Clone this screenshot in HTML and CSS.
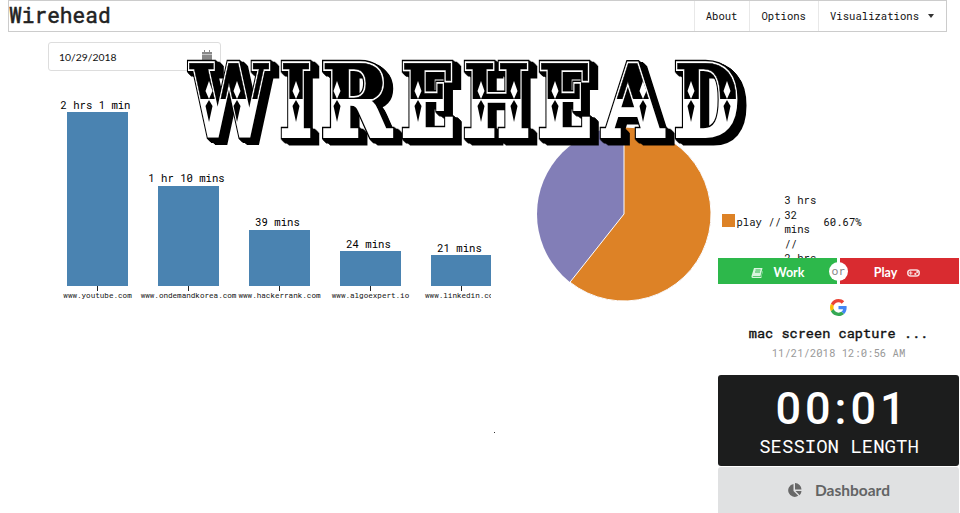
FILE: index.html
```html
<!DOCTYPE html>
<html lang="en">
<head>
<meta charset="utf-8">
<title>Wirehead</title>
<link rel="stylesheet" href="styles.css">
</head>
<body>
<nav class="nav">
  <div class="brand">Wirehead</div>
  <div class="links"><a>About</a><a>Options</a><a>Visualizations<i class="caret"></i></a></div>
</nav>
<main class="main">
  <section class="activity">
    <div class="date-input"><span>10/29/2018</span>
      <svg width="10" height="11" viewBox="0 0 10 11"><path d="M0 2h2V0h1v2h4V0h1v2h2v2H0zM0 4.500h10V11H0z" fill="#888"/></svg>
    </div>
    <div class="chart">
      <div class="col"><span class="value">2 hrs 1 min</span><div class="bar" style="height:174px"></div><i class="tick"></i><span class="site">www.youtube.com</span></div>
      <div class="col"><span class="value">1 hr 10 mins</span><div class="bar" style="height:100.500px"></div><i class="tick"></i><span class="site">www.ondemandkorea.com</span></div>
      <div class="col"><span class="value">39 mins</span><div class="bar" style="height:56.500px"></div><i class="tick"></i><span class="site">www.hackerrank.com</span></div>
      <div class="col"><span class="value">24 mins</span><div class="bar" style="height:35px"></div><i class="tick"></i><span class="site">www.algoexpert.io</span></div>
      <div class="col"><span class="value">21 mins</span><div class="bar" style="height:31px"></div><i class="tick"></i><span class="site">www.linkedin.com</span></div>
    </div>
  </section>
  <svg class="pie" width="176" height="176" viewBox="-88 -88 176 176">
    <circle r="87" fill="#827eb7"/>
    <path d="M0 0V-87A87 87 0 1 1 -54 68.200Z" fill="#dd8226" stroke="#fff"/>
  </svg>
  <div class="legend"><i class="swatch"></i><span class="kind">play //</span><span class="time">3 hrs<br>32<br>mins<br>//<br>2 hrs</span><span class="share">60.67%</span></div>
</main>
<i class="dot"></i>

<svg class="logo" width="572" height="96" viewBox="182 54 572 96">
  <defs>
    <linearGradient id="face" gradientUnits="userSpaceOnUse" x1="0" y1="61" x2="0" y2="139">
      <stop offset=".49" stop-color="#000"/><stop offset=".49" stop-color="#fff"/>
    </linearGradient>
    <g id="word">
      <text x="190" y="136" textLength="78" lengthAdjust="spacingAndGlyphs">W</text>
      <text x="280" y="136" textLength="32" lengthAdjust="spacingAndGlyphs">I</text>
      <text x="321" y="136" textLength="70" lengthAdjust="spacingAndGlyphs">R</text>
      <text x="401" y="136" textLength="54" lengthAdjust="spacingAndGlyphs">E</text>
      <text x="463" y="136" textLength="67" lengthAdjust="spacingAndGlyphs">H</text>
      <text x="538" y="136" textLength="54" lengthAdjust="spacingAndGlyphs">E</text>
      <text x="603" y="136" textLength="60" lengthAdjust="spacingAndGlyphs">A</text>
      <text x="674" y="136" textLength="65" lengthAdjust="spacingAndGlyphs">D</text>
    </g>
    <g id="gem"><path d="M0-17l3.500 10-3.500 8-3.500-8z" fill="#fff"/><path d="M0 2l3.500 6-3.500 16-3.500-16z" fill="#000"/></g>
  </defs>
  <g class="extrude"><use href="#word" stroke="#000" stroke-width="7" fill="#000"/></g>
  <use href="#word" stroke="#fff" stroke-width="4" fill="#fff"/>
  <use href="#word" fill="url(#face)" stroke="url(#face)" stroke-width=".5"/>
  <use href="#gem" x="209" y="98"/><use href="#gem" x="237" y="98"/>
  <use href="#gem" x="296" y="98"/><use href="#gem" x="337" y="98"/>
  <use href="#gem" x="418" y="98"/><use href="#gem" x="481" y="98"/>
  <use href="#gem" x="514" y="98"/><use href="#gem" x="555" y="98"/>
  <use href="#gem" x="643" y="98"/><use href="#gem" x="691" y="98"/><use href="#gem" x="727" y="98"/>
</svg>

<aside class="popup">
  <div class="modes">
    <div class="mode work"><svg width="12" height="10" viewBox="0 0 12 10"><path d="M3 0h8.500L9.500 8H2.500q-1 0-.8.800h8.500l1.300-6 .3.500-1.500 6.700H1.500Q0 9.500.5 8z" fill="#d9f4de"/><path d="M4.500 2h5M4 4h5" stroke="#2db84b"/></svg>Work</div>
    <div class="mode play">Play<svg width="13" height="8" viewBox="0 0 14 8"><rect x=".8" y=".8" width="12.400" height="6.400" rx="3.200" fill="none" stroke="#f8dcdd" stroke-width="1.600"/><path d="M2 4h4M4 2v4" stroke="#f8dcdd" stroke-width="1.200"/><circle cx="9" cy="5" r="1.200" fill="#f8dcdd"/><circle cx="11" cy="3" r="1.200" fill="#f8dcdd"/></svg></div>
    <span class="or">or</span>
  </div>
  <div class="page">
    <svg width="17" height="17" viewBox="0 0 48 48"><path fill="#EA4335" d="M24 9.500c3.540 0 6.710 1.220 9.210 3.600l6.850-6.850C35.900 2.380 30.470 0 24 0 14.620 0 6.510 5.380 2.560 13.220l7.980 6.190C12.430 13.720 17.740 9.500 24 9.500z"/><path fill="#4285F4" d="M46.980 24.550c0-1.570-.15-3.090-.38-4.550H24v9.020h12.940c-.58 2.960-2.260 5.480-4.780 7.180l7.730 6c4.510-4.180 7.090-10.360 7.090-17.650z"/><path fill="#FBBC05" d="M10.530 28.590c-.48-1.450-.76-2.990-.76-4.590s.27-3.140.76-4.590l-7.980-6.190C.92 16.460 0 20.120 0 24s.92 7.540 2.560 10.780z"/><path fill="#34A853" d="M24 48c6.480 0 11.930-2.130 15.890-5.810l-7.730-6c-2.150 1.450-4.920 2.300-8.160 2.300-6.260 0-11.570-4.220-13.470-9.910l-7.980 6.190C6.510 42.620 14.620 48 24 48z"/></svg>
    <div class="title">mac screen capture ...</div>
    <div class="stamp">11/21/2018 12:0:56 AM</div>
  </div>
  <div class="session"><div class="timer">00:01</div><div class="caption">SESSION LENGTH</div></div>
  <div class="dashboard"><svg width="15" height="15" viewBox="0 0 15 15" fill="#686868"><path d="M6.500 1v7l4.800 4.800A6.500 6.500 0 1 1 6.500 1z"/><path d="M8 0a6.500 6.500 0 0 1 6.500 6.500H8zM8.500 8h6a6.500 6.500 0 0 1-1.800 4.200z"/></svg>Dashboard</div>
</aside>
</body>
</html>
```
FILE: styles.css
```css
* { box-sizing: border-box; }
html { overflow: hidden; }
body {
  margin: 0;
  height: 513px;
  position: relative;
  overflow: hidden;
  background: #fff;
  color: #111;
  font: 10.6px/14.5px "Roboto Mono", "DejaVu Sans Mono", monospace;
}
svg { display: block; flex: none; }
.nav {
  display: flex;
  justify-content: space-between;
  width: 939px;
  height: 32px;
  margin-left: 8px;
  border: 1px solid #ccc;
}
.brand { font-size: 21.2px; line-height: 28px; color: #222; -webkit-text-stroke: .5px #222; }
.links { display: flex; }
.links a {
  display: flex;
  align-items: center;
  padding: 0 12px 0 11px;
  border-left: 1px solid #e8e8e8;
}
.caret {
  margin-left: 9px;
  border: 3px solid transparent;
  border-top: 4px solid #333;
  border-bottom: 0;
}
.main { display: flex; align-items: flex-start; }
.activity { width: 491px; padding: 10px 0 0 48px; overflow: hidden; }
.date-input {
  display: flex;
  align-items: center;
  justify-content: space-between;
  width: 173px;
  height: 29px;
  padding: 1px 8px 0 10px;
  border: 1px solid #ddd;
  border-radius: 3px;
  font-family: Lato, sans-serif;
  font-size: 10.400px;
}
.date-input svg { margin-bottom: 3px; }
.chart {
  display: flex;
  align-items: flex-end;
  gap: 30px;
  height: 228px;
  padding-left: 19px;
}
.col {
  display: flex;
  flex: none;
  flex-direction: column;
  align-items: center;
  width: 61px;
}
.value, .site { white-space: nowrap; }
.value { margin-right: 4px; color: #000; }
.bar { width: 61px; background: #4a83b1; }
.tick { width: 1px; height: 5px; background: #222; }
.site { font-size: 7.6px; line-height: 8px; }
.pie { margin: 94px 0 0 44.500px; }
.legend { display: flex; width: 150px; height: 65px; margin: 161px 0 0 10px; overflow: hidden; }
.swatch { width: 13px; height: 13px; margin: 21px 2px 0 0; background: #dd8226; }
.kind { width: 48px; margin-top: 22px; white-space: nowrap; }
.time { width: 39px; }
.share { margin-top: 22px; }
.dot { position: absolute; left: 494px; top: 432px; width: 1px; height: 1px; background: #333; }
.logo {
  position: absolute;
  left: 182px;
  top: 54px;
  font: bold 100px "DejaVu Serif", serif;
}
.extrude {
  filter: drop-shadow(1px 1px 0 #000) drop-shadow(1px 1px 0 #000) drop-shadow(2px 2px 0 #000) drop-shadow(4px 2px 0 #000);
}
.popup { position: absolute; left: 718px; top: 258px; width: 241px; height: 255px; background: #fff; }
.modes { display: flex; gap: 3px; position: relative; height: 26px; }
.mode {
  display: flex;
  flex: none;
  align-items: center;
  justify-content: center;
  width: 119px;
  padding-top: 4px;
  color: #fff;
  font: bold 12.5px/16px Lato, sans-serif;
}
.work { gap: 11px; background: #2db84b; }
.play { gap: 10px; background: #d92b30; padding-right: 5px; }
.or {
  position: absolute;
  left: 111px;
  top: 4px;
  width: 19px;
  height: 19px;
  border-radius: 50%;
  background: #fff;
  color: #888;
  font-size: 11.500px;
  line-height: 18px;
  text-align: center;
}
.page { display: flex; flex-direction: column; align-items: center; height: 91px; padding-top: 15px; }
.title { margin-top: 8px; font-size: 13.6px; line-height: 18px; white-space: nowrap; -webkit-text-stroke: .4px #111; }
.stamp { margin-top: 4px; color: #999; white-space: nowrap; }
.session {
  height: 91px;
  padding-top: 11px;
  border-radius: 3px;
  background: #1c1d1d;
  color: #fff;
  text-align: center;
}
.timer { padding-left: 8px; font: 500 45px/46px Roboto, sans-serif; letter-spacing: 4px; }
.caption { padding-left: 1px; font-size: 19px; line-height: 27px; }
.dashboard {
  display: flex;
  align-items: center;
  justify-content: center;
  gap: 13px;
  height: 46px;
  margin-top: 1px;
  border-radius: 3px 3px 0 0;
  background: #e0e1e2;
  color: #636465;
  font: bold 15.5px/20px Lato, sans-serif;
}
```
